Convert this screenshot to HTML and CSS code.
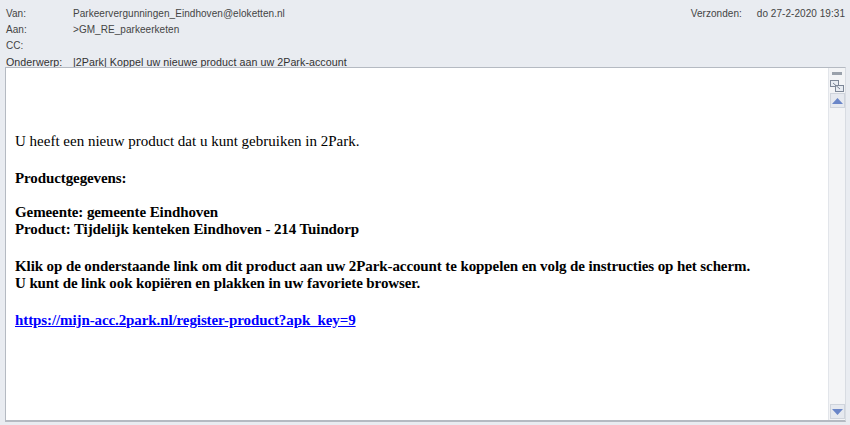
FILE: index.html
```html
<!DOCTYPE html>
<html>
<head>
<meta charset="utf-8">
<link rel="stylesheet" href="styles.css">
</head>
<body>
<div class="window">
  <div class="header">
    <div class="fields">
      <div class="row"><span class="label">Van:</span><span class="value">Parkeervergunningen_Eindhoven@eloketten.nl</span></div>
      <div class="row"><span class="label">Aan:</span><span class="value">&gt;GM_RE_parkeerketen</span></div>
      <div class="row"><span class="label">CC:</span><span class="value"></span></div>
      <div class="row subject"><span class="label">Onderwerp:</span><span class="value">|2Park| Koppel uw nieuwe product aan uw 2Park-account</span></div>
    </div>
    <div class="sent"><span class="sent-label">Verzonden:</span><span>do 27-2-2020 19:31</span></div>
  </div>
  <div class="body">
    <div class="content">
      <p>U heeft een nieuw product dat u kunt gebruiken in 2Park.</p>
      <p class="b tight">Productgegevens:</p>
      <p class="b">Gemeente: gemeente Eindhoven<br>Product: Tijdelijk kenteken Eindhoven - 214 Tuindorp</p>
      <p class="b">Klik op de onderstaande link om dit product aan uw 2Park-account te koppelen en volg de instructies op het scherm.<br>U kunt de link ook kopiëren en plakken in uw favoriete browser.</p>
      <p class="b"><a href="#">https://mijn-acc.2park.nl/register-product?apk_key=9</a></p>
    </div>
    <div class="scrollbar">
      <div class="dash"></div>
      <div class="split">
        <svg width="14" height="12" viewBox="0 0 14 12">
          <rect x="0.5" y="0.5" width="8" height="6" fill="#e8ecf2" stroke="#7d8797"/>
          <rect x="5.5" y="5.5" width="8" height="6" fill="#e8ecf2" stroke="#7d8797"/>
          <path d="M3 3 L10 9" stroke="#7d8797" stroke-width="1"/>
        </svg>
      </div>
      <div class="btn up"><svg width="11" height="6" viewBox="0 0 11 6"><path d="M0 6 L5.5 0 L11 6 Z" fill="#6a86c8"/></svg></div>
      <div class="track"></div>
      <div class="btn down"><svg width="11" height="6" viewBox="0 0 11 6"><path d="M0 0 L5.5 6 L11 0 Z" fill="#6a86c8"/></svg></div>
    </div>
  </div>
</div>
</body>
</html>
```
FILE: styles.css
```css
html, body {
  margin: 0;
  padding: 0;
  background: #e9ecf1;
}
.window {
  width: 850px;
  height: 425px;
  display: flex;
  flex-direction: column;
  box-sizing: border-box;
  padding: 6px 4px 3px 5px;
}
.header {
  display: flex;
  justify-content: space-between;
  font-family: "Liberation Sans", Arial, sans-serif;
  font-size: 10px;
  letter-spacing: 0.05px;
  color: #444;
  height: 61px;
}
.fields {
  display: flex;
  flex-direction: column;
}
.row {
  display: flex;
  height: 16px;
  line-height: 16px;
}
.subject {
  font-size: 10.7px;
  color: #333;
}
.label {
  width: 67px;
  padding-left: 1px;
}
.sent {
  display: flex;
  height: 16px;
  line-height: 16px;
  padding-right: 1px;
}
.sent-label {
  width: 66px;
}
.body {
  flex: 1;
  display: flex;
  background: #fff;
  border: 1px solid #b5bac2;
  border-right-color: #d8dce2;
  border-bottom: 2px solid #b5bac2;
}
.content {
  flex: 1;
  padding: 65px 0 0 9px;
  font-family: "Liberation Serif", serif;
  font-size: 15px;
  line-height: 17px;
  color: #000;
}
.content p {
  margin: 0 0 20px 0;
}
.content .tight {
  margin-bottom: 17px;
}
.content .b {
  font-weight: bold;
  letter-spacing: -0.1px;
}
.content a {
  color: #0000ff;
  text-decoration: underline;
}
.scrollbar {
  width: 16px;
  display: flex;
  flex-direction: column;
  align-items: center;
  background: #f3f4f6;
  border-left: 1px solid #e2e5ea;
}
.dash {
  width: 10px;
  height: 3px;
  background: #9aa1ab;
  margin-top: 4px;
}
.split {
  margin-top: 3px;
  height: 13px;
}
.btn {
  width: 15px;
  height: 15px;
  display: flex;
  align-items: center;
  justify-content: center;
  background: #e6e9ef;
  border: 1px solid #cfd4dc;
  box-sizing: border-box;
}
.up {
  margin-top: 2px;
}
.track {
  flex: 1;
}
.down {
  margin-bottom: 1px;
}
```
